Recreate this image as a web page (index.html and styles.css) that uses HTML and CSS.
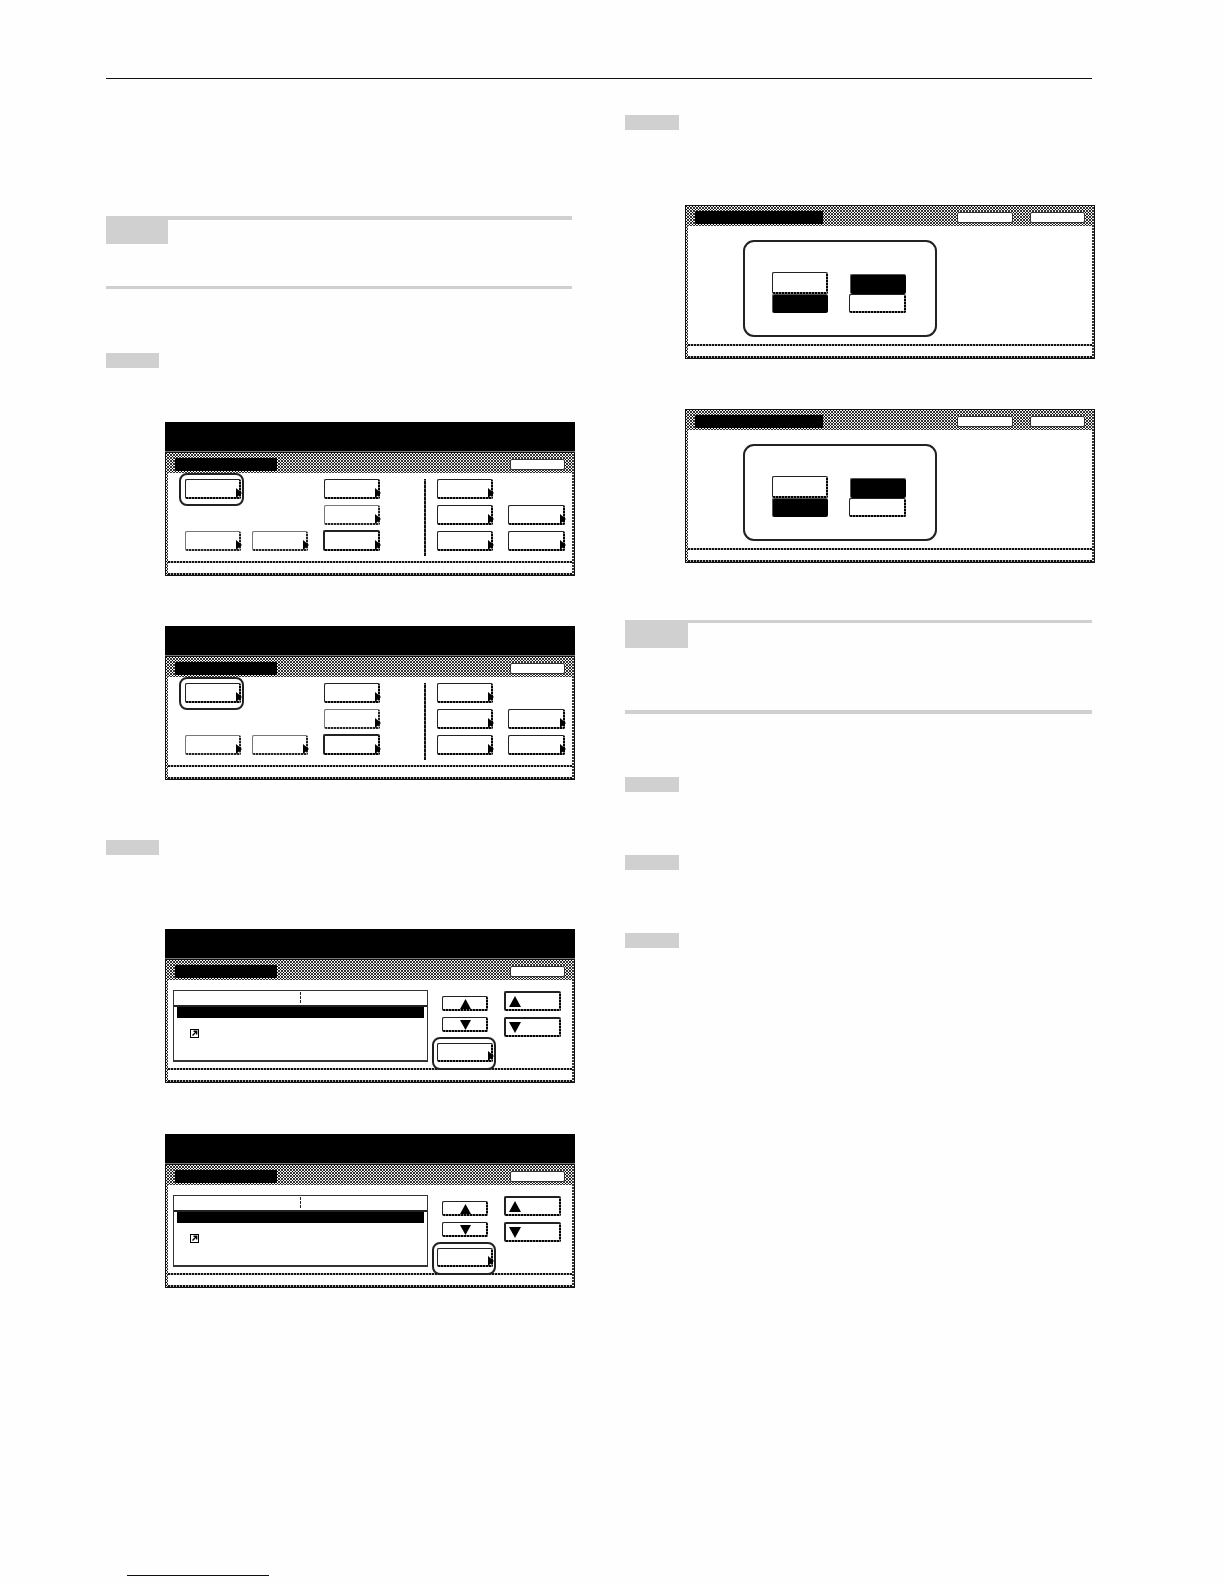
FILE: index.html
```html
<!DOCTYPE html>
<html lang="en">
<head>
<meta charset="utf-8">
<title>Manual page</title>
<link rel="stylesheet" href="styles.css">
</head>
<body>
<header class="top-rule"></header>
<main class="columns">
  <section class="col col-left">
    <div class="note note-left"><div class="note-label"></div></div>
    <div class="step step-1"></div>

    <div class="screen screen-a">
      <div class="scr-head"></div>
      <div class="panel">
        <div class="title"><div class="title-name"></div><div class="title-btn"></div></div>
        <div class="body menu">
          <div class="ring c1 r1"><div class="btn arrow"></div></div>
          <div class="btn arrow c5 r1"></div>
          <div class="divider"></div>
          <div class="btn arrow c9 r1"></div>
          <div class="btn arrow light c5 r3"></div>
          <div class="btn arrow c9 r3"></div>
          <div class="btn arrow c11 r3"></div>
          <div class="btn arrow light c1 r5"></div>
          <div class="btn arrow light c3 r5"></div>
          <div class="btn arrow heavy c5 r5"></div>
          <div class="btn arrow c9 r5"></div>
          <div class="btn arrow c11 r5"></div>
        </div>
        <div class="footer"></div>
      </div>
    </div>

    <div class="screen screen-b">
      <div class="scr-head"></div>
      <div class="panel">
        <div class="title"><div class="title-name"></div><div class="title-btn"></div></div>
        <div class="body menu">
          <div class="ring c1 r1"><div class="btn arrow"></div></div>
          <div class="btn arrow c5 r1"></div>
          <div class="divider"></div>
          <div class="btn arrow c9 r1"></div>
          <div class="btn arrow light c5 r3"></div>
          <div class="btn arrow c9 r3"></div>
          <div class="btn arrow c11 r3"></div>
          <div class="btn arrow light c1 r5"></div>
          <div class="btn arrow light c3 r5"></div>
          <div class="btn arrow heavy c5 r5"></div>
          <div class="btn arrow c9 r5"></div>
          <div class="btn arrow c11 r5"></div>
        </div>
        <div class="footer"></div>
      </div>
    </div>

    <div class="step step-2"></div>

    <div class="screen screen-c">
      <div class="scr-head"></div>
      <div class="panel">
        <div class="title"><div class="title-name"></div><div class="title-btn"></div></div>
        <div class="body list">
          <div class="table">
            <div class="table-head"><span class="table-split"></span></div>
            <div class="table-row"></div>
            <svg class="link-icon" viewBox="0 0 9 9" aria-hidden="true"><rect x="0.5" y="0.5" width="8" height="8" fill="#fff" stroke="#000"/><path d="M2.5 6.5 L6 3 M3.5 2.3 H6.7 V5.5" fill="none" stroke="#000" stroke-width="1.4"/></svg>
          </div>
          <div class="btn small up-btn"><svg class="tri" viewBox="0 0 10 9" aria-hidden="true"><polygon points="5,0 10,9 0,9"/></svg></div>
          <div class="btn big-up"><svg class="tri" viewBox="0 0 10 9" aria-hidden="true"><polygon points="5,0 10,9 0,9"/></svg></div>
          <div class="btn small down-btn"><svg class="tri" viewBox="0 0 10 9" aria-hidden="true"><polygon points="0,0 10,0 5,9"/></svg></div>
          <div class="btn big-down"><svg class="tri" viewBox="0 0 10 9" aria-hidden="true"><polygon points="0,0 10,0 5,9"/></svg></div>
          <div class="ring wide-btn"><div class="btn arrow"></div></div>
        </div>
        <div class="footer"></div>
      </div>
    </div>

    <div class="screen screen-d">
      <div class="scr-head"></div>
      <div class="panel">
        <div class="title"><div class="title-name"></div><div class="title-btn"></div></div>
        <div class="body list">
          <div class="table">
            <div class="table-head"><span class="table-split"></span></div>
            <div class="table-row"></div>
            <svg class="link-icon" viewBox="0 0 9 9" aria-hidden="true"><rect x="0.5" y="0.5" width="8" height="8" fill="#fff" stroke="#000"/><path d="M2.5 6.5 L6 3 M3.5 2.3 H6.7 V5.5" fill="none" stroke="#000" stroke-width="1.4"/></svg>
          </div>
          <div class="btn small up-btn"><svg class="tri" viewBox="0 0 10 9" aria-hidden="true"><polygon points="5,0 10,9 0,9"/></svg></div>
          <div class="btn big-up"><svg class="tri" viewBox="0 0 10 9" aria-hidden="true"><polygon points="5,0 10,9 0,9"/></svg></div>
          <div class="btn small down-btn"><svg class="tri" viewBox="0 0 10 9" aria-hidden="true"><polygon points="0,0 10,0 5,9"/></svg></div>
          <div class="btn big-down"><svg class="tri" viewBox="0 0 10 9" aria-hidden="true"><polygon points="0,0 10,0 5,9"/></svg></div>
          <div class="ring wide-btn"><div class="btn arrow"></div></div>
        </div>
        <div class="footer"></div>
      </div>
    </div>
  </section>

  <section class="col col-right">
    <div class="step step-r1"></div>

    <div class="screen screen-e">
      <div class="panel">
        <div class="title">
          <div class="title-name title-name-long"></div>
          <div class="title-btn title-btn-first"></div>
          <div class="title-btn"></div>
        </div>
        <div class="body dialog">
          <div class="choice-box">
            <div class="btn plain"></div>
            <div class="btn plain on on-top"></div>
            <div class="btn plain on"></div>
            <div class="btn plain"></div>
          </div>
        </div>
        <div class="footer"></div>
      </div>
    </div>

    <div class="screen screen-f">
      <div class="panel">
        <div class="title">
          <div class="title-name title-name-long"></div>
          <div class="title-btn title-btn-first"></div>
          <div class="title-btn"></div>
        </div>
        <div class="body dialog">
          <div class="choice-box">
            <div class="btn plain"></div>
            <div class="btn plain on on-top"></div>
            <div class="btn plain on"></div>
            <div class="btn plain"></div>
          </div>
        </div>
        <div class="footer"></div>
      </div>
    </div>

    <div class="note note-right"><div class="note-label"></div></div>
    <div class="step step-r2"></div>
    <div class="step step-r3"></div>
    <div class="step step-r4"></div>
  </section>
</main>
<footer class="page-link"></footer>
</body>
</html>
```
FILE: styles.css
```css
* { box-sizing: border-box; }

html, body {
  margin: 0;
  padding: 0;
  background: #fefefe;
  font-family: "Liberation Sans", sans-serif;
}

.top-rule {
  margin: 78px 0 0 106px;
  width: 986px;
  height: 1px;
  background: #111;
}

.columns {
  display: grid;
  grid-template-columns: 466px 467px;
  column-gap: 53px;
  margin-left: 106px;
}

.col { display: block; }

/* Notes and step tabs */
.note {
  border-top: 4px solid #d0d0d0;
  border-bottom: 3px solid #d0d0d0;
}
.note-left { margin-top: 137px; height: 73px; }
.note-right { margin-top: 57px; height: 94px; border-bottom-width: 4px; border-top-width: 3px; }

.note-label { width: 62px; height: 24px; background: #d0d0d0; }
.note-right .note-label { width: 63px; height: 25px; }

.step { width: 53px; height: 15px; background: #d0d0d0; }
.col-right .step { width: 54px; }
.step-1 { margin-top: 64px; }
.step-2 { margin-top: 60px; }
.step-r1 { margin-top: 36px; }
.step-r2, .step-r3, .step-r4 { margin-top: 63px; }

/* Screens */
.screen {
  display: flex;
  flex-direction: column;
  width: 410px;
  height: 154px;
}
.screen-a { margin: 54px 0 0 59px; }
.screen-b { margin: 50px 0 0 59px; }
.screen-c { margin: 74px 0 0 59px; }
.screen-d { margin: 51px 0 0 59px; }
.screen-e { margin: 75px 0 0 60px; }
.screen-f { margin: 50px 0 0 60px; }

.scr-head {
  height: 30px;
  flex: none;
  background: #000;
  border-bottom: 1px solid #777;
}

.panel {
  flex: 1;
  display: flex;
  flex-direction: column;
  border: 1px solid #111;
  padding: 2px 2px 0;
  background:
    conic-gradient(from 90deg at 1px 1px, transparent 50%, #000 0 75%, transparent 0) 0 0 / 3px 3px,
    conic-gradient(from 90deg at 2px 2px, transparent 50%, #333 0 75%, transparent 0) 1px 1px / 3px 3px,
    #f2f2f2;
}

.title {
  flex: none;
  display: flex;
  align-items: flex-start;
  height: 18px;
  padding: 3px 7px 0;
}
.title-name {
  width: 102px;
  height: 13px;
  background: #000;
  border-radius: 1px;
}
.title-name-long { width: 128px; }
.title-btn {
  width: 55px;
  height: 11px;
  margin: 1px 0 0 auto;
  background: #fff;
  border: 1px solid #333;
  border-radius: 2px;
}
.title-btn-first { margin-right: 17px; width: 56px; }
.title-btn-first + .title-btn { margin-left: 0; }

.body {
  flex: none;
  height: 88px;
  background: #fff;
}

.footer {
  flex: 1;
  background:
    repeating-linear-gradient(90deg, #111 0 2px, #aaa 2px 3px) top / 100% 2px no-repeat,
    repeating-linear-gradient(90deg, #111 0 2px, #aaa 2px 3px) bottom / 100% 2px no-repeat,
    #fff;
}

/* Buttons */
.btn {
  position: relative;
  border-top: 1px solid #222;
  border-left: 1px solid #222;
  border-radius: 2px;
  background:
    repeating-linear-gradient(90deg, #000 0 2px, #777 2px 3px) bottom / 100% 2px no-repeat,
    repeating-linear-gradient(0deg, #000 0 2px, #777 2px 3px) right / 2px 100% no-repeat,
    #fff;
}
.btn.light {
  border-top-color: #777;
  border-left-color: #777;
  background:
    repeating-linear-gradient(90deg, #222 0 2px, #aaa 2px 3px) bottom / 100% 2px no-repeat,
    repeating-linear-gradient(0deg, #222 0 2px, #aaa 2px 3px) right / 2px 100% no-repeat,
    #fff;
}
.btn.heavy {
  border-top-width: 2px;
  border-left-width: 2px;
  margin: -1px 0 0 -1px;
}

.arrow::after {
  content: "";
  position: absolute;
  right: -1px;
  bottom: 1px;
  width: 0;
  height: 0;
  border-left: 6px solid #000;
  border-top: 5px solid transparent;
  border-bottom: 5px solid transparent;
}

/* Highlight ring drawn over the screen around a button */
.ring {
  position: relative;
  z-index: 1;
  display: grid;
  margin: -6px -3px -7px -6px;
  padding: 4px 1px 5px 4px;
  background: #fff;
  border: 2px solid #222;
  border-radius: 8px;
}

/* Menu screens */
.menu {
  display: grid;
  grid-template-columns: 56px 11px 56px 16px 56px 44px 2px 11px 56px 15px 57px;
  grid-template-rows: 20px 6px 20px 6px 20px 5px;
  padding: 6px 0 0 17px;
}
.c1 { grid-column: 1; }
.c3 { grid-column: 3; }
.c5 { grid-column: 5; }
.c9 { grid-column: 9; }
.c11 { grid-column: 11; }
.r1 { grid-row: 1; }
.r3 { grid-row: 3; }
.r5 { grid-row: 5; }
.divider {
  grid-column: 7;
  grid-row: 1 / 7;
  background: repeating-linear-gradient(0deg, #111 0 3px, #666 3px 4px);
}

/* List screens */
.list {
  display: grid;
  grid-template-columns: 255px 56px 57px;
  grid-template-rows: 20px 20px 19px;
  column-gap: 9px;
  row-gap: 6px;
  padding: 11px 0 0 5px;
}
.list > .big-up, .list > .big-down { grid-column: 3; margin-left: 2px; width: 57px; }
.table {
  grid-column: 1;
  grid-row: 1 / 4;
  height: 72px;
  margin-top: -1px;
  border: 1px solid #333;
  border-bottom-width: 2px;
  background: #fff;
}
.table-head {
  display: block;
  height: 15px;
  border-bottom: 2px solid #222;
  padding-left: 126px;
}
.table-split {
  display: block;
  width: 1px;
  height: 11px;
  margin-top: 1px;
  border-left: 1px dashed #222;
}
.table-row {
  height: 11px;
  margin: 0 3px;
  background: #000;
}
.link-icon {
  display: block;
  width: 9px;
  height: 9px;
  margin: 11px 0 0 16px;
}
.small {
  display: flex;
  align-items: center;
  justify-content: center;
  justify-self: center;
  width: 46px;
  height: 15px;
}
.up-btn { grid-column: 2; grid-row: 1; align-self: end; }
.down-btn { grid-column: 2; grid-row: 2; align-self: start; }
.big-up, .big-down {
  display: flex;
  align-items: flex-start;
  padding: 3px 0 0 3px;
  border-top-width: 2px;
  border-left-width: 2px;
}
.big-up { grid-row: 1; }
.big-down { grid-row: 2; }
.tri { width: 11px; height: 10px; flex: none; display: block; fill: #000; }
.big-up .tri, .big-down .tri { width: 12px; height: 11px; }
.wide-btn {
  grid-column: 2;
  grid-row: 3;
  margin: -6px -3px -8px -5px;
  padding: 4px 1px 6px 3px;
}

/* Dialog screens */
.dialog { height: 118px; padding: 14px 0 0 55px; }
.choice-box {
  display: grid;
  grid-template-columns: 56px 57px;
  grid-template-rows: 22px 19px;
  column-gap: 21px;
  width: 194px;
  height: 97px;
  padding: 30px 0 0 27px;
  border: 2px solid #222;
  border-radius: 11px;
}
.btn.on { background: #000; border-color: #555; }
.on-top { margin-top: 2px; margin-left: 1px; }

.page-link {
  margin: 287px 0 0 127px;
  width: 142px;
  height: 1px;
  background: #00008b;
}
```
